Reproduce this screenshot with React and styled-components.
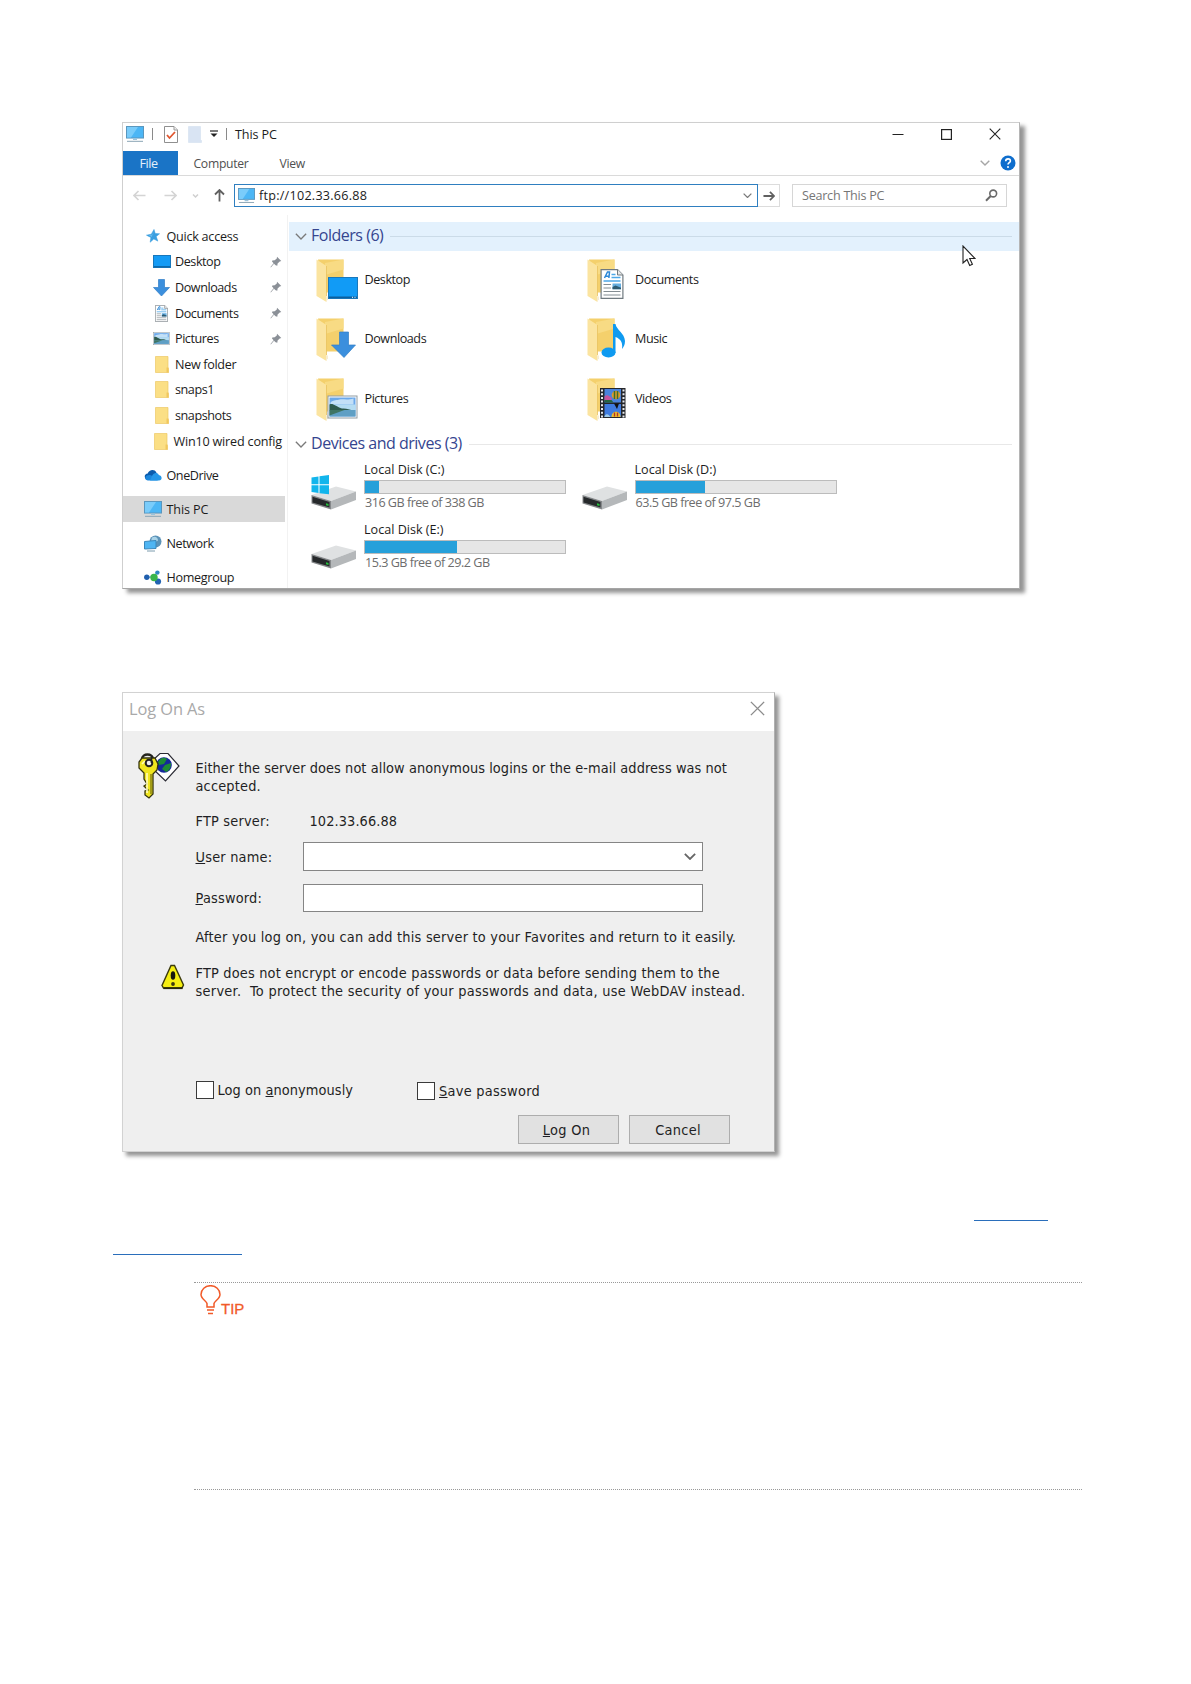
import React from 'react';
import styled, { createGlobalStyle } from 'styled-components';

const GlobalStyle = createGlobalStyle`
    * { box-sizing: border-box; }
    body {
        margin: 0;
        background: #fff;
        font-family: "Open Sans", "Noto Sans", sans-serif;
    }
    svg { display: block; flex: none; }
`

const Page = styled.div`
    width: 1191px;
    height: 1684px;
    padding-top: 122px;
    overflow: hidden;
`

/* ---------- explorer window ---------- */

const Explorer = styled.section`
    position: relative;
    display: flex;
    flex-direction: column;
    width: 898px;
    height: 467px;
    margin-left: 122px;
    border: 1px solid #cfcfcf;
    border-bottom-color: #a5a5a5;
    border-right-color: #b5b5b5;
    background: #fff;
    box-shadow: 5px 4px 4px rgba(0, 0, 0, 0.42);
    color: #1c1c1c;
    font-size: 12.6px;
    letter-spacing: -0.035em;
    white-space: nowrap;
`

const TitleBar = styled.div`
    display: flex;
    align-items: center;
    height: 28px;
    padding: 0 18px 6px 3px;
`

const QuickTools = styled.div`
    display: flex;
    align-items: center;
    flex: 1;
    letter-spacing: -0.01em;
`

const Divider = styled.i`
    width: 1px;
    height: 12px;
    margin: 0 ${p => p.$right}px 0 ${p => p.$left}px;
    background: #8a8a8a;
`

const WindowButtons = styled.div`
    display: flex;
    gap: 37px;
    align-items: center;
`

const Ribbon = styled.div`
    display: flex;
    align-items: stretch;
    height: 25px;
    border-bottom: 1px solid #dadada;
    color: #505050;
    line-height: 25px;
`

const FileTab = styled.div`
    width: 55px;
    padding-right: 4px;
    background: #1a74c6;
    color: #e4f0fb;
    text-align: center;
`

const Tab = styled.div`
    padding-left: ${p => p.$left}px;
    font-size: 12.2px;
    letter-spacing: -0.025em;
`

const RibbonEnd = styled.div`
    display: flex;
    flex: 1;
    align-items: center;
    justify-content: flex-end;
    gap: 10px;
    padding-right: 3px;
`

const AddressRow = styled.div`
    display: flex;
    align-items: center;
    height: 39px;
    padding: 0 12px 0 10px;
`

const NavArrows = styled.div`
    display: flex;
    align-items: center;
    width: 101px;
`

const Forward = styled.span`
    margin-left: 18px;
`

const AddressBox = styled.div`
    display: flex;
    align-items: center;
    width: 524px;
    height: 23px;
    padding: 0 5px 0 3px;
    border: 1px solid #2f7fc0;
`

const AddressText = styled.span`
    flex: 1;
    padding-left: 4px;
    letter-spacing: 0.02em;
`

const GoButton = styled.div`
    display: flex;
    align-items: center;
    justify-content: center;
    width: 22px;
    height: 23px;
    border: 1px solid #dcdcdc;
    border-left: 0;
`

const SearchBox = styled.div`
    display: flex;
    align-items: center;
    justify-content: space-between;
    width: 215px;
    height: 23px;
    margin-left: 12px;
    padding: 0 8px 1px 9px;
    border: 1px solid #d6d6d6;
    color: #767676;
    letter-spacing: -0.02em;
`

const Content = styled.div`
    display: flex;
    flex: 1;
    min-height: 0;
    overflow: hidden;
`

const Sidebar = styled.nav`
    width: 165px;
    padding-top: 8.5px;
    border-right: 1px solid #f2f2f2;
`

const NavItem = styled.div`
    display: flex;
    align-items: center;
    width: 162px;
    height: 25.6px;
    margin-top: ${p => p.$gap || 0}px;
    padding-left: ${p => (p.$child ? 29.5 : 20.5)}px;
    padding-right: 3px;
    background: ${p => (p.$active ? '#d9d9d9' : 'transparent')};
`

const NavIcon = styled.span`
    display: flex;
    justify-content: center;
    width: ${p => (p.$wide ? 23 : 22.5)}px;
    padding-right: 4px;
`

const NavLabel = styled.span`
    flex: 1;
    letter-spacing: ${p => p.$spacing || '-0.035em'};
`

const Main = styled.main`
    flex: 1;
    padding-left: 1px;
    padding-top: 7px;
`

const GroupHeader = styled.div`
    display: flex;
    align-items: center;
    height: 29px;
    padding-left: 6px;
    padding-right: 7px;
    background: ${p => (p.$hover ? '#e3f1fd' : 'transparent')};
    color: #35458f;
    font-size: 16px;
    line-height: 24px;
    letter-spacing: -0.03em;
`

const GroupTitle = styled.span`
    padding: 0 7px 3px 4px;
`

const Rule = styled.i`
    flex: 1;
    height: 1px;
    background: ${p => (p.$hover ? '#cbdbe8' : '#e8e8e8')};
`

const Tiles = styled.div`
    display: grid;
    grid-template-columns: 270.5px 270.5px;
    grid-auto-rows: 59.6px;
    padding-left: 22px;
`

const Tile = styled.div`
    display: flex;
    align-items: center;
    height: 59.6px;
`

const TileIcon = styled.span`
    width: 53.5px;
    padding-left: 5px;
`

const TileName = styled.span`
    padding-bottom: 3px;
`

const DiskIconCell = styled.span`
    width: 53px;
    padding-top: 8px;
`

const DiskInfo = styled.div`
    display: flex;
    flex-direction: column;
    width: 202px;
    padding-bottom: 4px;
    line-height: 17px;
`

const DiskName = styled.span`
    height: 19px;
    letter-spacing: 0;
`

const DiskBar = styled.div`
    height: 14px;
    border: 1px solid #bcbcbc;
    background: #e6e6e6;
`

const DiskUsed = styled.div`
    width: ${p => p.$used}px;
    height: 12px;
    background: #26a0da;
`

const DiskFree = styled.span`
    padding-left: 1px;
    color: #6d6d6d;
    line-height: 18px;
    letter-spacing: -0.04em;
`

const Pointer = styled.svg`
    position: absolute;
    left: 839px;
    top: 122px;
`

/* ---------- log on dialog ---------- */

const Dialog = styled.section`
    display: flex;
    flex-direction: column;
    width: 653px;
    height: 460px;
    margin: 103px 0 0 122px;
    border: 1px solid #d2d2d2;
    border-right-color: #b0b0b0;
    background: #efefef;
    box-shadow: 4px 4px 4px rgba(0, 0, 0, 0.42);
    color: #1f1f24;
    font-family: "DejaVu Sans Condensed", "DejaVu Sans", sans-serif;
    font-stretch: condensed;
    font-size: 14.4px;
    line-height: 18px;
    letter-spacing: 0.1px;
    white-space: pre;
`

const DialogTitle = styled.header`
    display: flex;
    justify-content: space-between;
    height: 38px;
    padding: 8px 9px 0 6px;
    background: #fff;
    color: #a9a9a9;
    font: 16.4px/15px "Open Sans", "Noto Sans", sans-serif;
    letter-spacing: -0.005em;
`

const DialogBody = styled.div`
    display: grid;
    grid-template-columns: 72.5px 1fr;
    padding-top: 21px;
`

const IconCell = styled.div`
    padding-top: ${p => p.$top}px;
    padding-left: ${p => p.$left}px;
`

const Message = styled.p`
    display: flex;
    flex-direction: column;
    margin: 0;
    padding-top: ${p => p.$top}px;
    height: ${p => p.$height}px;
`

const Line = styled.span`
    letter-spacing: ${p => p.$spacing}px;
`

const Field = styled.div`
    display: flex;
    align-items: center;
    grid-column: 2;
    height: ${p => p.$height}px;
`

const FieldLabel = styled.label`
    width: ${p => p.$width || 107.5}px;
    letter-spacing: 0.2px;
`

const TextInput = styled.div`
    display: flex;
    align-items: center;
    justify-content: flex-end;
    width: 400px;
    height: ${p => p.$height}px;
    padding-right: 6px;
    border: 1px solid #858585;
    background: #fff;
`

const Checks = styled.div`
    display: flex;
    grid-column: 2;
    height: 35px;
`

const Check = styled.div`
    display: flex;
    align-items: center;
    gap: 4px;
    width: 221.5px;
    height: 19px;
    margin-top: ${p => p.$top || 0}px;
    letter-spacing: ${p => p.$spacing}px;
`

const CheckBox = styled.i`
    width: 18px;
    height: 18px;
    border: 1px solid #3a3a3a;
    background: #fff;
`

const Buttons = styled.footer`
    display: flex;
    justify-content: flex-end;
    gap: 10.5px;
    grid-column: 1 / 3;
    padding-right: 44px;
`

const Button = styled.div`
    width: 101px;
    height: 29px;
    padding-right: 3px;
    border: 1px solid #adadad;
    background: #e1e1e1;
    line-height: 28px;
    letter-spacing: 0.3px;
    text-align: center;
`

/* ---------- page foot ---------- */

const LinkLines = styled.div`
    display: flex;
    flex-direction: column;
    width: 935px;
    height: 130px;
    margin-left: 113px;
    padding-top: 68px;
    gap: 33px;
`

const LinkLine = styled.i`
    flex: none;
    align-self: ${p => p.$side};
    width: ${p => p.$width}px;
    height: 1px;
    background: #2a6ebb;
`

const Tip = styled.aside`
    width: 888px;
    height: 208px;
    margin-left: 194px;
    border-top: 1px dotted #999;
    border-bottom: 1px dotted #999;
`

const TipHead = styled.div`
    display: flex;
    align-items: flex-end;
    width: 60px;
    height: 33px;
    padding-left: 6px;
    color: #f15a29;
    font: 15px/14px "Liberation Sans", Arial, sans-serif;
    -webkit-text-stroke: 0.3px #f15a29;
`

/* ---------- icons ---------- */

const Monitor = ({ w = 18 }) => (
    <svg width={w} height={w * 0.92} viewBox="0 0 18 16.5">
        <rect x="0.5" y="0.5" width="17" height="11.5" fill="#4cb6f5" stroke="#5a96bd" />
        <path d="M1 1h11L5 11.5H1z" fill="#7accfa" />
        <path d="M7 12.5h4v1.5H7z" fill="#9cc4dc" />
        <path d="M1 15.3h16" stroke="#8aa5b5" strokeWidth="1" />
    </svg>
)

const Chevron = ({ w = 10, color = '#7a7a7a', stroke = 1.4 }) => (
    <svg width={w} height={w * 0.6} viewBox="0 0 10 6">
        <path d="M0.7 0.7L5 5L9.3 0.7" fill="none" stroke={color} strokeWidth={stroke} />
    </svg>
)

const Arrow = ({ dir = 0, color, w = 13, stroke = 1.6 }) => (
    <svg width={w} height={w} viewBox="0 0 13 13">
        <g transform={`rotate(${dir} 6.5 6.5)`} fill="none" stroke={color} strokeWidth={stroke}>
            <path d="M0.5 6.5h11.5M7.5 2l4.5 4.5L7.5 11" />
        </g>
    </svg>
)

const Cross = ({ w, color }) => (
    <svg width={w} height={w} viewBox="0 0 12 12">
        <path d="M0.7 0.7L11.3 11.3M11.3 0.7L0.7 11.3" stroke={color} strokeWidth="1.1" />
    </svg>
)

const Star = () => (
    <svg width="14" height="14" viewBox="0 0 14 14">
        <path d="M8 0.5l1.2 4 4.3.3-3.3 2.7 1.6 4.6-4-2.2-3.6 3.3.7-4.8L.5 6.2l4.8-1z" fill="#3a9fe0" stroke="#3a9fe0" strokeWidth="0.6" />
        <path d="M7.7 2l-.9 4-4 .5 3 1.3z" fill="#74c3f3" />
    </svg>
)

const Pin = () => (
    <svg width="12" height="12" viewBox="0 0 12 12">
        <path d="M7 0.8L11.3 5 9.7 5.4 7.6 7.6 7.3 9.8 5.6 9.3 4 7.7 0.8 11.4 0.5 11 3.6 7.3 2 5.6 2.3 4.5 4.7 4.3 6.8 2.4z" fill="#8b9097" />
    </svg>
)

const DesktopIcon = () => (
    <svg width="18" height="13" viewBox="0 0 18 13">
        <rect x="0.5" y="0.5" width="17" height="12" fill="#149bf5" stroke="#1877bb" />
        <path d="M1 11.7h16" stroke="#0c5f9d" />
    </svg>
)

const DownIcon = ({ w = 17 }) => (
    <svg width={w} height={w * 1.03} viewBox="0 0 17 17.5">
        <path d="M5.5 0.5h6v8h5L8.5 17 0.5 8.5h5z" fill="#3b8fdd" stroke="#2f7dc5" strokeWidth="0.7" />
    </svg>
)

const DocShape = () => (
    <g>
        <path d="M0.6 0.6h16.4l5.4 5.4v23.4H0.6z" fill="#fff" stroke="#707a80" strokeWidth="1.2" />
        <path d="M17 0.6V6h5.4" fill="#e6e6e6" stroke="#707a80" />
        <path d="M4 9L7 3h2l-.6 6M5 7.2h3.3" fill="none" stroke="#2c88d8" strokeWidth="1.5" />
        <path d="M11 5.5h4M11 8.5h9M3 12h17" stroke="#4ca7e8" strokeWidth="1.4" />
        <path d="M3 15.5h7.5M3 19h7.5M3 22.5h17M3 26h17" stroke="#848d93" strokeWidth="1.2" />
        <path d="M12 14.5h8.5v5.7H12z" fill="#66aee0" />
        <path d="M12 18l3-1.5 5.500 2.200v1.500H12z" fill="#2e5b73" />
    </g>
)

const DocIcon = () => (
    <svg width="13" height="17" viewBox="0 0 23 30"><DocShape /></svg>
)

const PhotoShape = () => (
    <g>
        <rect x="0.5" y="0.5" width="29" height="22" fill="#fff" stroke="#909ba2" />
        <rect x="2" y="2" width="26" height="19" fill="#6ba8ea" />
        <path d="M3 7c3-3 7-2 9-3 3-1 7 1 14-1v6H3z" fill="#c3e0f7" />
        <path d="M2 9h26v6H2z" fill="#b4dcf2" />
        <path d="M2 9c2-1 4 0 6 1 3 1 4 3 8 3 4 0 6 1 9 2H2z" fill="#2d5a4e" />
        <path d="M2 14.500h26V21H2z" fill="#5f9fc4" />
        <path d="M2 14.500h15L2 20z" fill="#3f7563" />
    </g>
)

const PhotoIcon = () => (
    <svg width="17" height="13" viewBox="0 0 30 23"><PhotoShape /></svg>
)

const SmallFolder = () => (
    <svg width="14" height="17" viewBox="0 0 14 17">
        <path d="M0.500 0.500h12.500v11l.7 1v4H.5z" fill="#fbdf85" stroke="#ecc865" strokeWidth="0.7" />
        <path d="M11.500 11.500h2v5h-2z" fill="#f0c75e" />
    </svg>
)

const Cloud = () => (
    <svg width="18" height="12" viewBox="0 0 18 12">
        <path d="M2 10.500C-.5 7.500 1 4.800 3.700 4.500 5 .5 10.500-.5 12.500 3.500L7 11z" fill="#0b5cad" />
        <path d="M4 11.500C1 11.500.5 8 3 6.600 5 5.500 7 6 8.500 7.200L14 11.500z" fill="#1a86dc" />
        <path d="M8 7C9.500 3.500 13.500 3 14.800 6 18.500 6.500 18.500 11.500 15 11.500H6z" fill="#2497e8" />
    </svg>
)

const NetworkIcon = () => (
    <svg width="18" height="17" viewBox="0 0 18 17">
        <circle cx="11.500" cy="6.500" r="6" fill="#5c93b8" />
        <path d="M8 2.500c3-2 6 0 6 3l-3 2-4-1z" fill="#a9d3e8" />
        <path d="M0.500 6.500l11.500-1v8L.5 14z" fill="#4fb5f3" stroke="#3a87bb" />
        <path d="M3 16h8" stroke="#7d9cae" />
    </svg>
)

const HomegroupIcon = () => (
    <svg width="18" height="15" viewBox="0 0 18 15">
        <path d="M3 7.500l7-1L13.500 2M11 8l3 4" stroke="#7cbcd8" strokeWidth="1.500" fill="none" />
        <circle cx="2.800" cy="7.300" r="2.700" fill="#205fae" />
        <circle cx="13.400" cy="2.600" r="2.200" fill="#2e86c0" />
        <circle cx="14" cy="11.500" r="3.100" fill="#2263b2" />
        <circle cx="10" cy="7.500" r="3.700" fill="#39b54a" />
    </svg>
)

const overlays = {
    desktop: (
        <g transform="translate(12 18)">
            <rect x="0.500" y="0.500" width="29" height="21" fill="#119bf6" stroke="#1a78bb" />
            <path d="M1 20.300h28" stroke="#0b5f9e" strokeWidth="1.600" />
            <path d="M24 20.300h1M26.500 20.300h1" stroke="#fff" />
        </g>
    ),
    download: <path d="M23.500 14h9v13h7L28 39.500 15.500 27h8z" fill="#3b8fdd" stroke="#317fc7" strokeWidth="0.700" />,
    picture: <g transform="translate(11.500 17.500)"><PhotoShape /></g>,
    document: <g transform="translate(13.500 10)"><DocShape /></g>,
    music: (
        <g>
            <ellipse cx="21.500" cy="34.500" rx="7" ry="5" fill="#0f9af0" />
            <path d="M26 6h2.500c1 6 9 9 9.500 17 0 4-1.500 6-3 8 1-6-1-10-6.500-12v16H26z" fill="#0f9af0" />
        </g>
    ),
    video: (
        <g transform="translate(13 10)">
            <rect width="25.500" height="30" fill="#24262b" />
            <path d="M2 1.500v28M23.500 1.500v28" stroke="#e8eaed" strokeWidth="2" strokeDasharray="2 1.700" />
            <rect x="4.500" y="1" width="16.500" height="13.500" fill="#4a83dc" />
            <rect x="4.500" y="16" width="16.500" height="13" fill="#3f7bdf" />
            <circle cx="16" cy="7" r="4.300" fill="#df9b2a" />
            <path d="M14.500 3v8M17.500 3v8" stroke="#3b6e2a" strokeWidth="1.500" />
            <path d="M4.500 8.500c3-3 5 0 7 1v3h-7z" fill="#c5549c" />
            <path d="M4.500 12h7l2 2.500h-9z" fill="#25663f" />
            <path d="M14 15.500h5L17 21z" fill="#111" />
            <path d="M11.500 29c0-7 9-7 9 0z" fill="#ecc22f" />
            <path d="M14.500 24.500v4M17.500 24.500v4" stroke="#b2352d" strokeWidth="1.400" />
            <path d="M4.500 28c2-3 4-2 6 1h-6z" fill="#9fcbe9" />
        </g>
    ),
}

const FolderIcon = ({ kind }) => (
    <svg width="44" height="44" viewBox="0 0 44 44">
        <path d="M2 0.500h25.500v33H8z" fill="#f4d06c" />
        <path d="M9 4l18.500-3.500v10L9 16z" fill="#f8db84" />
        <path d="M0.500 0.500L10.500 7v36L0.500 37z" fill="#fbe4a0" />
        <path d="M10.500 7v30" stroke="#e9c25e" strokeWidth="0.800" />
        <path d="M10 37.500h2v3l-2 2z" fill="#f7ecd0" />
        {overlays[kind]}
    </svg>
)

const DiskIcon = ({ system }) => (
    <svg width="46" height="36" viewBox="0 0 46 36">
        <path d="M0.500 20L25 11.500 45 16.500 20 26z" fill="#dfe1e2" />
        <path d="M20 26L45 16.500v8.500L20 34.500z" fill="#b5b8ba" />
        <path d="M0.500 20L20 26v8.500L0.500 28.500z" fill="#85888a" />
        <path d="M1.500 21.800L18.500 27v5.500L1.500 27.500z" fill="#26292b" />
        <path d="M15 28.200l2.500.7v2l-2.500-.7z" fill="#25c13c" />
        {system && (
            <g fill="#12b5ec">
                <path d="M0.500 2.500L7.500 1.500V9.300H0.500zM8.500 1.300L18 0v9.300H8.500zM0.500 10.300h7V18L0.500 17zM8.500 10.300H18v9L8.500 18.200z" />
            </g>
        )}
    </svg>
)

const KeyIcon = () => (
    <svg width="43" height="47" viewBox="0 0 43 47">
        <path d="M15 8l7-6.500h8L41 14 27.500 29 14 16z" fill="#fff" stroke="#2a2a33" strokeWidth="1.200" />
        <circle cx="26" cy="13" r="7.800" fill="#15289b" />
        <path d="M20 10c3-5 6-5 9-3l-3 5-5 1zM27 13l6-2c0 5-2 8-5 9l-4-3z" fill="#1d8b35" />
        <path d="M4 7c0-6 11-6 11 0" fill="none" stroke="#24241c" strokeWidth="2.400" />
        <path d="M4 6h13l3 6-1 6-4 4v20l-4 4-4-3v-4l3-1-4-4 3-2-3-5v-6L1 16v-6z" fill="#efe51f" stroke="#35340e" strokeWidth="1.300" />
        <path d="M9 21v20M4 12l3-3" stroke="#fffcb3" strokeWidth="1.700" />
        <path d="M13 22v20" stroke="#8b8414" strokeWidth="1.500" />
        <circle cx="11" cy="11" r="3.300" fill="#eee" stroke="#222" strokeWidth="2" />
        <path d="M13.500 3v8" stroke="#222" strokeWidth="1.600" />
    </svg>
)

const WarnIcon = () => (
    <svg width="24" height="26" viewBox="0 0 24 26">
        <path d="M10 1.500h3.500l9 19.500-1.500 3H2.500L1 21.500z" fill="#f5ee12" stroke="#3b3a0c" strokeWidth="1.400" />
        <path d="M2.500 24.200h19" stroke="#26260c" strokeWidth="1.800" />
        <ellipse cx="12" cy="11.500" rx="2.300" ry="4.300" fill="#17170d" />
        <circle cx="12" cy="20" r="1.900" fill="#3c3a10" />
    </svg>
)

const Bulb = () => (
    <svg width="21" height="31" viewBox="0 0 21 31" fill="none" stroke="#f15a29" strokeWidth="1.500">
        <path d="M7 22v-3.500C6.500 16 1 14 1 9.500a9.500 8.800 0 0 1 19 0c0 4.500-5.500 6.500-6 9V22z" />
        <path d="M7 25h7M8 28.500h5" />
    </svg>
)

/* ---------- data ---------- */

const quickAccess = [
    { name: 'Desktop', icon: <DesktopIcon />, pinned: true },
    { name: 'Downloads', icon: <DownIcon />, pinned: true },
    { name: 'Documents', icon: <DocIcon />, pinned: true },
    { name: 'Pictures', icon: <PhotoIcon />, pinned: true },
    { name: 'New folder', icon: <SmallFolder />, spacing: '-0.025em' },
    { name: 'snaps1', icon: <SmallFolder /> },
    { name: 'snapshots', icon: <SmallFolder /> },
    { name: 'Win10 wired config', icon: <SmallFolder />, spacing: '-0.015em' },
]

const places = [
    { name: 'OneDrive', icon: <Cloud /> },
    { name: 'This PC', icon: <Monitor />, active: true, spacing: '-0.01em' },
    { name: 'Network', icon: <NetworkIcon /> },
    { name: 'Homegroup', icon: <HomegroupIcon />, spacing: '-0.025em' },
]

const folders = [
    { name: 'Desktop', kind: 'desktop' },
    { name: 'Documents', kind: 'document' },
    { name: 'Downloads', kind: 'download' },
    { name: 'Music', kind: 'music' },
    { name: 'Pictures', kind: 'picture' },
    { name: 'Videos', kind: 'video' },
]

const disks = [
    { name: 'Local Disk (C:)', free: '316 GB free of 338 GB', used: 14, system: true },
    { name: 'Local Disk (D:)', free: '63.5 GB free of 97.5 GB', used: 69 },
    { name: 'Local Disk (E:)', free: '15.3 GB free of 29.2 GB', used: 92 },
]

const ExplorerWindow = () => (
    <Explorer>
        <TitleBar>
            <QuickTools>
                <Monitor />
                <Divider $left={8} $right={11} />
                <svg width="14" height="17" viewBox="0 0 14 17">
                    <path d="M0.500 0.500h9.500l3.500 3.500v12.500H.5z" fill="#fff" stroke="#8f8f8f" />
                    <path d="M10 0.500V4h3.500" fill="#eee" stroke="#9a9a9a" />
                    <path d="M3 9l2.500 3L11 6" fill="none" stroke="#e0562f" strokeWidth="1.800" />
                </svg>
                <svg width="32" height="17" viewBox="0 0 32 17">
                    <path d="M10.500 0.500H22.500v13l1 1v2h-13z" fill="#d9e4f3" stroke="#cfdcec" strokeWidth="0.500" />
                </svg>
                <svg width="8" height="8" viewBox="0 0 8 8">
                    <path d="M0 1h8" stroke="#333" strokeWidth="1.300" />
                    <path d="M0.500 3.500h7L4 7z" fill="#222" />
                </svg>
                <Divider $left={8} $right={8} />
                <span>This PC</span>
            </QuickTools>
            <WindowButtons>
                <svg width="12" height="12" viewBox="0 0 12 12"><path d="M0.500 6.500h11" stroke="#222" /></svg>
                <svg width="11" height="11" viewBox="0 0 11 11"><rect x="0.600" y="0.600" width="9.800" height="9.800" fill="none" stroke="#222" strokeWidth="1.200" /></svg>
                <Cross w={12} color="#222" />
            </WindowButtons>
        </TitleBar>
        <Ribbon>
            <FileTab>File</FileTab>
            <Tab $left={15.5}>Computer</Tab>
            <Tab $left={31}>View</Tab>
            <RibbonEnd>
                <Chevron w={10} color="#a6a6a6" />
                <svg width="16" height="16" viewBox="0 0 16 16">
                    <circle cx="8" cy="8" r="7.500" fill="#0f6ecd" />
                    <path d="M5.700 6.200c0-3.200 4.700-3 4.700-.2C10.400 7.600 8 7.800 8 9.500" fill="none" stroke="#fff" strokeWidth="1.600" />
                    <circle cx="8" cy="12" r="1" fill="#fff" />
                </svg>
            </RibbonEnd>
        </Ribbon>
        <AddressRow>
            <NavArrows>
                <Arrow dir={180} color="#d4d4d4" />
                <Forward><Arrow color="#d4d4d4" /></Forward>
                <svg width="36" height="6" viewBox="0 0 36 6"><path d="M16 1.500l2.500 2.500 2.500-2.500" fill="none" stroke="#cfcfcf" strokeWidth="1.500" /></svg>
                <Arrow dir={-90} color="#616161" stroke={1.800} />
            </NavArrows>
            <AddressBox>
                <Monitor w={17} />
                <AddressText>ftp://102.33.66.88</AddressText>
                <Chevron w={9} />
            </AddressBox>
            <GoButton><Arrow w={12} color="#606060" stroke={1.900} /></GoButton>
            <SearchBox>
                <span>Search This PC</span>
                <svg width="13" height="13" viewBox="0 0 13 13" fill="none" stroke="#6a6a6a">
                    <circle cx="8.200" cy="4.500" r="3.400" strokeWidth="1.600" />
                    <path d="M5.700 7L1 11.700" strokeWidth="2" />
                </svg>
            </SearchBox>
        </AddressRow>
        <Content>
            <Sidebar>
                <NavItem>
                    <NavIcon $wide><Star /></NavIcon>
                    <NavLabel $spacing="-0.02em">Quick access</NavLabel>
                </NavItem>
                {quickAccess.map(item => (
                    <NavItem key={item.name} $child>
                        <NavIcon>{item.icon}</NavIcon>
                        <NavLabel $spacing={item.spacing}>{item.name}</NavLabel>
                        {item.pinned && <Pin />}
                    </NavItem>
                ))}
                {places.map(item => (
                    <NavItem key={item.name} $gap={8.5} $active={item.active}>
                        <NavIcon $wide>{item.icon}</NavIcon>
                        <NavLabel $spacing={item.spacing}>{item.name}</NavLabel>
                    </NavItem>
                ))}
            </Sidebar>
            <Main>
                <GroupHeader $hover>
                    <Chevron w={12} stroke={1.100} />
                    <GroupTitle>Folders (6)</GroupTitle>
                    <Rule $hover />
                </GroupHeader>
                <Tiles>
                    {folders.map(item => (
                        <Tile key={item.name}>
                            <TileIcon><FolderIcon kind={item.kind} /></TileIcon>
                            <TileName>{item.name}</TileName>
                        </Tile>
                    ))}
                </Tiles>
                <GroupHeader>
                    <Chevron w={12} stroke={1.100} />
                    <GroupTitle>Devices and drives (3)</GroupTitle>
                    <Rule />
                </GroupHeader>
                <Tiles>
                    {disks.map(disk => (
                        <Tile key={disk.name}>
                            <DiskIconCell><DiskIcon system={disk.system} /></DiskIconCell>
                            <DiskInfo>
                                <DiskName>{disk.name}</DiskName>
                                <DiskBar><DiskUsed $used={disk.used} /></DiskBar>
                                <DiskFree>{disk.free}</DiskFree>
                            </DiskInfo>
                        </Tile>
                    ))}
                </Tiles>
            </Main>
        </Content>
        <Pointer width="14" height="22" viewBox="0 0 14 22">
            <path d="M1 1v17l4-3.500 2.700 6 2.700-1.200-2.700-5.800H13z" fill="#fff" stroke="#222" strokeWidth="1.100" />
        </Pointer>
    </Explorer>
)

const LogOnDialog = () => (
    <Dialog>
        <DialogTitle>
            <span>Log On As</span>
            <Cross w={15} color="#8c8c8c" />
        </DialogTitle>
        <DialogBody>
            <IconCell $left={15}><KeyIcon /></IconCell>
            <Message $top={7} $height={60}>
                <Line $spacing={0.075}>Either the server does not allow anonymous logins or the e-mail address was not</Line>
                <Line $spacing={0.18}>accepted.</Line>
            </Message>
            <Field $height={18}>
                <FieldLabel $width={114}>FTP server:</FieldLabel>
                <span>102.33.66.88</span>
            </Field>
            <Field $height={53}>
                <FieldLabel><u>U</u>ser name:</FieldLabel>
                <TextInput $height={29}><Chevron w={12} color="#666" stroke={1.500} /></TextInput>
            </Field>
            <Field $height={29}>
                <FieldLabel><u>P</u>assword:</FieldLabel>
                <TextInput $height={28} />
            </Field>
            <Field $height={50}>
                <Line $spacing={0.22}>After you log on, you can add this server to your Favorites and return to it easily.</Line>
            </Field>
            <IconCell $left={38} $top={2}><WarnIcon /></IconCell>
            <Message $top={2} $height={118}>
                <Line $spacing={0.19}>FTP does not encrypt or encode passwords or data before sending them to the</Line>
                <Line $spacing={0.29}>server.  To protect the security of your passwords and data, use WebDAV instead.</Line>
            </Message>
            <Checks>
                <Check $spacing={0.08}><CheckBox /><span>Log on <u>a</u>nonymously</span></Check>
                <Check $top={1} $spacing={0.28}><CheckBox /><span><u>S</u>ave password</span></Check>
            </Checks>
            <Buttons>
                <Button><u>L</u>og On</Button>
                <Button>Cancel</Button>
            </Buttons>
        </DialogBody>
    </Dialog>
)

const App = () => (
    <Page>
        <GlobalStyle />
        <ExplorerWindow />
        <LogOnDialog />
        <LinkLines>
            <LinkLine $side="flex-end" $width={74} />
            <LinkLine $side="flex-start" $width={129} />
        </LinkLines>
        <Tip>
            <TipHead><Bulb />TIP</TipHead>
        </Tip>
    </Page>
)

export default App;
